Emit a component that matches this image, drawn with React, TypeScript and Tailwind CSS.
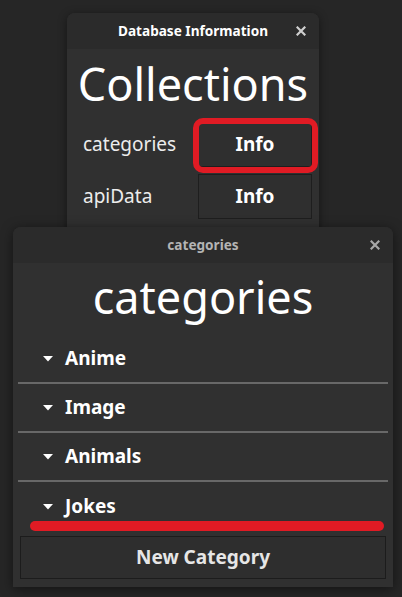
import React from 'react';

const font = { fontFamily: '"Noto Sans", "Open Sans", sans-serif' };

function CloseIcon({ color }: { color: string }) {
  return (
    <svg width="10" height="10" viewBox="0 0 10 10" className="block">
      <path d="M1.5 1.5 L8.5 8.5 M8.5 1.5 L1.5 8.5" stroke={color} strokeWidth="2.2" strokeLinecap="square" />
    </svg>
  );
}

function Caret() {
  return (
    <svg width="10" height="6" viewBox="0 0 10 6" className="block">
      <path d="M0 0 H10 L5 5.5 Z" fill="#ffffff" />
    </svg>
  );
}

function WindowHeader({ title, dim }: { title: string; dim?: boolean }) {
  return (
    <div className="relative flex h-[36px] items-center justify-center rounded-t-[8px] bg-[#2b2b2b]">
      <span className={`text-[13.6px] font-bold ${dim ? 'text-[#b4b4b4]' : 'text-white'}`}>{title}</span>
      <div className="absolute right-[13px] top-[13px]">
        <CloseIcon color={dim ? '#a8a8a8' : '#cfcfcf'} />
      </div>
    </div>
  );
}

const collections = ['categories', 'apiData'];
const categories = ['Anime', 'Image', 'Animals', 'Jokes'];

export default function App() {
  return (
    <div className="relative h-[597px] w-[402px] overflow-hidden bg-[#262626]" style={font}>
      {/* Database Information window */}
      <div className="absolute left-[67px] top-[13px] w-[252px] rounded-t-[8px] bg-[#303030] shadow-[0_2px_10px_rgba(0,0,0,0.45)]">
        <WindowHeader title="Database Information" />
        <div className="flex h-[230px] flex-col pt-[6px]">
          <h1 className="text-center text-[45px] leading-[58px] text-white">Collections</h1>
          <div className="mt-[9px] flex flex-col gap-[7px] pl-[16px] pr-[7px]">
            {collections.map((c) => (
              <div key={c} className="flex items-center justify-between">
                <span className="text-[19px] text-[#ececec]">{c}</span>
                <button className="flex h-[45px] w-[114px] items-center justify-center border border-[#1e1e1e] bg-[#2f2f2f] text-[19px] font-bold text-white">
                  Info
                </button>
              </div>
            ))}
          </div>
        </div>
        {/* annotation */}
        <div className="absolute left-[126px] top-[105px] h-[55px] w-[125px] rounded-[10px] border-[6px] border-[#e01b24]" />
      </div>

      {/* categories window */}
      <div className="absolute left-[13px] top-[227px] w-[380px] rounded-t-[8px] bg-[#303030] shadow-[0_2px_12px_rgba(0,0,0,0.5)]">
        <WindowHeader title="categories" dim />
        <div className="flex flex-col pb-[8px] pt-[7px]">
          <h1 className="text-center text-[45px] leading-[53px] text-white">categories</h1>
          <div className="mt-[12px] px-[5px]">
            {categories.map((c, i) => (
              <div key={c}>
                <div className={`flex items-center gap-[12px] pl-[25px] ${i === categories.length - 1 ? 'h-[49px]' : 'h-[47px]'}`}>
                  <Caret />
                  <span className="text-[19px] font-bold text-white">{c}</span>
                </div>
                {i < categories.length - 1 && <div className="h-[2px] bg-[#686868]" />}
              </div>
            ))}
          </div>
          <div className="mt-[5px] px-[7px]">
            <button className="flex h-[43px] w-full items-center justify-center border border-[#1c1c1c] bg-[#2e2e2e] text-[19px] font-bold text-[#e6e6e6]">
              New Category
            </button>
          </div>
        </div>
        {/* annotation */}
        <div className="absolute left-[17px] top-[294px] h-[10px] w-[354px] rounded-full bg-[#e01b24]" />
      </div>
    </div>
  );
}
